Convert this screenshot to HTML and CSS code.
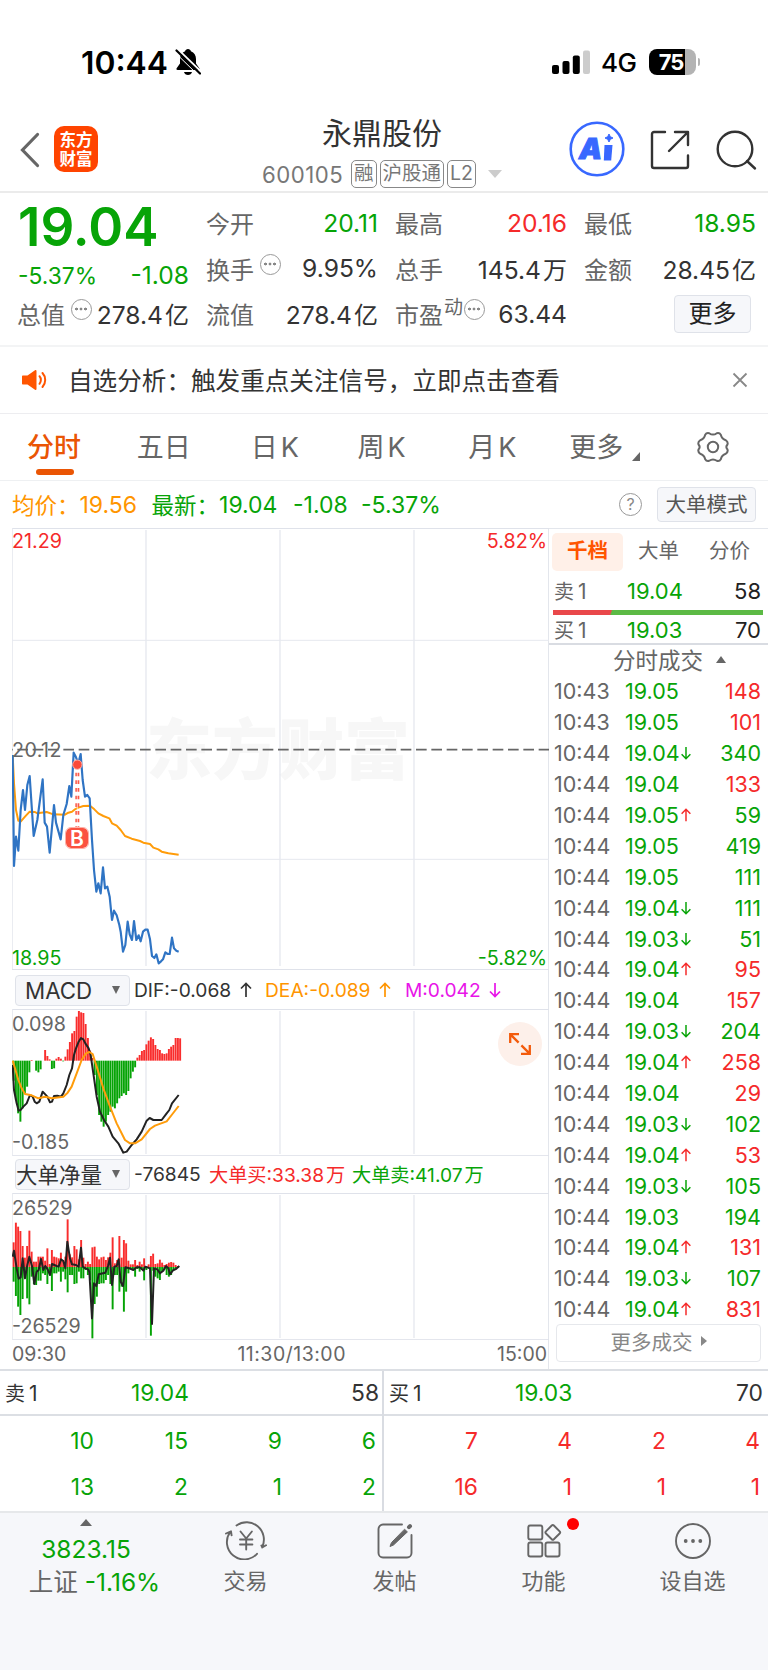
FILE: index.html
```html
<!DOCTYPE html>
<html lang="zh-CN">
<head>
    <meta charset="utf-8">
    <title>永鼎股份 600105</title>
    <link rel="stylesheet" href="styles.css">
</head>
<body>
    <div class="statusbar">
        <span class="time">10:44</span>
        <svg class="bell" width="26" height="28" viewBox="0 0 26 28">
            <path d="M13 1c-1.500 0-2.600 1-2.900 2.200C6.800 4.600 5 7.500 5 11v4.500L1.800 20c-.8 1.200-.3 2 .9 2h20.600c1.200 0 1.700-.8.900-2L21 15.500V11c0-3.500-1.800-6.400-5.100-7.800C15.600 2 14.500 1 13 1z"/>
            <path d="M9 24h8c-.5 1.900-2 3-4 3s-3.500-1.100-4-3z"/>
            <path d="M2.500 1l24 23" stroke="#fff" stroke-width="2"/>
            <path d="M1.500 2.500l23.500 23" stroke="#000" stroke-width="2.200" stroke-linecap="round"/>
            <path d="M0 4.500l23.500 23" stroke="#fff" stroke-width="1"/>
        </svg>
        <svg class="signal" width="38" height="24" viewBox="0 0 38 24">
            <rect x="0" y="15" width="7" height="9" rx="2"/>
            <rect x="10.500" y="11" width="7" height="13" rx="2"/>
            <rect x="20.800" y="5.500" width="7" height="18.500" rx="2"/>
            <rect x="31" y="0.500" width="7" height="23.500" rx="2" fill="#ccc"/>
        </svg>
        <span class="net">4G</span>
        <span class="battery"><b>75</b></span>
        <span class="battery-tip"></span>
    </div>

    <header class="header">
        <svg class="back" width="20" height="36" viewBox="0 0 20 36"><path d="M17.500 2.500L2.500 18l15 15.500" fill="none" stroke="#666" stroke-width="3.200" stroke-linecap="round"/></svg>
        <div class="logo">东方<br>财富</div>
        <div class="title">
            <h1>永鼎股份</h1>
            <div class="code">
                <span class="num">600105</span>
                <span class="tag">融</span>
                <span class="tag">沪股通</span>
                <span class="tag">L2</span>
                <i class="down"></i>
            </div>
        </div>
        <svg class="ai" width="56" height="56" viewBox="0 0 56 56">
            <circle cx="28" cy="28" r="26.300" fill="none" stroke="#3868ff" stroke-width="2.600"/>
            <text x="10" y="37.500">A</text>
            <path d="M35.500 24h8l-1.300 15.500h-7.400z" fill="#3868ff"/>
            <path d="M40 13l1.300 2.700L44 17l-2.700 1.300L40 21l-1.300-2.700L36 17l2.700-1.300z" fill="#3868ff" stroke="#3868ff" stroke-width="1"/>
        </svg>
        <svg class="share" width="40" height="40" viewBox="0 0 40 40" fill="none" stroke="#333" stroke-width="2.400" stroke-linecap="round" stroke-linejoin="round">
            <path d="M15 2H4a2 2 0 0 0-2 2v32a2 2 0 0 0 2 2h32a2 2 0 0 0 2-2V25.500"/>
            <path d="M25 2h13v13M38 2L19 21"/>
        </svg>
        <svg class="search" width="42" height="42" viewBox="0 0 42 42" fill="none" stroke="#333" stroke-width="2.400" stroke-linecap="round"><circle cx="20" cy="20" r="17.300"/><path d="M32 32l8 7.500"/></svg>
    </header>

    <section class="quote">
        <div class="price green">19.04</div>
        <div class="item"><label>今开</label><b class="green">20.11</b></div>
        <div class="item"><label>最高</label><b class="red">20.16</b></div>
        <div class="item"><label>最低</label><b class="green">18.95</b></div>
        <div class="item change green"><span>-5.37%</span><b class="green">-1.08</b></div>
        <div class="item"><label>换手</label><i class="dots"></i><b>9.95%</b></div>
        <div class="item"><label>总手</label><b>145.4<em>万</em></b></div>
        <div class="item"><label>金额</label><b>28.45<em>亿</em></b></div>
        <div class="item"><label>总值</label><i class="dots"></i><b>278.4<em>亿</em></b></div>
        <div class="item"><label>流值</label><b>278.4<em>亿</em></b></div>
        <div class="item"><label>市盈</label><sup>动</sup><i class="dots tight"></i><b>63.44</b></div>
        <div class="item"><button class="more">更多</button></div>
    </section>

    <section class="notice">
        <svg width="26" height="22" viewBox="0 0 26 22">
            <path d="M1 6.500h4.500L13 1.200c.8-.5 1.500-.1 1.500.8v18c0 .9-.7 1.300-1.500.8L5.500 15.500H1c-.6 0-1-.4-1-1v-7c0-.6.4-1 1-1z" fill="#ff5500"/>
            <path d="M17.500 7.200c1.800 2 1.800 5.600 0 7.600M20.500 4c3.600 3.800 3.600 10.200 0 14" fill="none" stroke="#ff5500" stroke-width="2" stroke-linecap="round"/>
        </svg>
        <p>自选分析：触发重点关注信号，立即点击查看</p>
        <svg class="close" width="16" height="16" viewBox="0 0 16 16"><path d="M1.500 1.500l13 13M14.500 1.500l-13 13" stroke="#888" stroke-width="1.800"/></svg>
    </section>

    <nav class="tabs">
        <a class="active">分时</a>
        <a>五日</a>
        <a>日<i>K</i></a>
        <a>周<i>K</i></a>
        <a>月<i>K</i></a>
        <a class="tab-more">更多</a>
        <svg class="gear" width="32" height="32" viewBox="0 0 32 32" fill="none" stroke="#666" stroke-width="2" stroke-linejoin="round">
            <path d="M12.200 2.200Q16 5 19.800 2.200Q22.500 1.500 23.800 3.800Q24.800 8 28.800 9.200Q31.300 11 30.500 13.500Q28.200 16 30.500 18.500Q31.300 21 28.800 22.800Q24.800 24 23.800 28.200Q22.500 30.500 19.800 29.800Q16 27 12.200 29.800Q9.500 30.500 8.200 28.200Q7.200 24 3.200 22.800Q.7 21 1.500 18.500Q3.800 16 1.500 13.500Q.7 11 3.200 9.200Q7.200 8 8.200 3.800Q9.500 1.500 12.200 2.200z"/>
            <circle cx="16" cy="16" r="5.200"/>
        </svg>
    </nav>

    <div class="infobar">
        <span class="orange name">均价：</span><span class="orange avg">19.56</span>
        <span class="green name">最新：</span><span class="green v1">19.04</span><span class="green v2">-1.08</span><span class="green v3">-5.37%</span>
        <i class="help">?</i>
        <button>大单模式</button>
    </div>

    <main class="board">
        <div class="charts">
            <div class="chart main-chart">
                <span class="watermark">东方财富</span>
                <svg id="price" width="537" height="442" viewBox="0 0 1611 1326"></svg>
                <span class="lt red">21.29</span>
                <span class="rt red">5.82%</span>
                <span class="mid">20.12</span>
                <span class="lb green">18.95</span>
                <span class="rb green">-5.82%</span>
                <span class="buy">B</span>
            </div>
            <div class="legend">
                <button>MACD<i></i></button>
                <span class="dif">DIF:-0.068 <svg class="arr" viewBox="0 0 12 16"><path d="M6 15V1.500M1 6.500l5-5 5 5"/></svg></span>
                <span class="dea orange">DEA:-0.089 <svg class="arr" viewBox="0 0 12 16"><path d="M6 15V1.500M1 6.500l5-5 5 5"/></svg></span>
                <span class="m">M:0.042 <svg class="arr" viewBox="0 0 12 16"><path d="M6 1v13.500M1 9.500l5 5 5-5"/></svg></span>
            </div>
            <div class="chart">
                <svg id="macd" width="537" height="147" viewBox="0 0 1611 441"></svg>
                <span class="lt">0.098</span>
                <span class="lb">-0.185</span>
                <span class="expand">
                    <svg width="24" height="24" viewBox="0 0 24 24" fill="none" stroke="#f35b0c" stroke-width="2.300"><path d="M2.200 11V2.200H11M2.600 2.600l8 8M21.800 13v8.800H13M21.400 21.400l-8-8"/></svg>
                </span>
            </div>
            <div class="legend second">
                <button>大单净量<i></i></button>
                <span class="net-v">-76845</span>
                <span class="net-b red">大单买:33.38<em>万</em></span>
                <span class="net-s green">大单卖:41.07<em>万</em></span>
            </div>
            <div class="chart">
                <svg id="flow" width="537" height="147" viewBox="0 0 1611 441"></svg>
                <span class="lt">26529</span>
                <span class="lb">-26529</span>
            </div>
            <div class="axis"><span>09:30</span><span class="noon">11:30/13:00</span><span>15:00</span></div>
        </div>

        <aside class="side">
            <div class="side-tabs"><a class="on">千档</a><a>大单</a><a>分价</a></div>
            <div class="level sell"><label>卖<i>1</i></label><span class="green">19.04</span><b>58</b></div>
            <div class="ratio"></div>
            <div class="level buyl"><label>买<i>1</i></label><span class="green">19.03</span><b>70</b></div>
            <div class="deal-title">分时成交<i></i></div>
            <div id="deals"></div>
            <button class="more-deals">更多成交<i></i></button>
        </aside>
    </main>

    <section class="depth">
        <div class="half">
            <div class="best"><label>卖<i>1</i></label><span class="green">19.04</span><b>58</b></div>
            <div class="queue green">
                <span>10</span><span>15</span><span>9</span><span>6</span>
                <span>13</span><span>2</span><span>1</span><span>2</span>
            </div>
        </div>
        <div class="half">
            <div class="best"><label>买<i>1</i></label><span class="green">19.03</span><b>70</b></div>
            <div class="queue red">
                <span>7</span><span>4</span><span>2</span><span>4</span>
                <span>16</span><span>1</span><span>1</span><span>1</span>
            </div>
        </div>
    </section>

    <footer class="footer">
        <div class="index">
            <i class="up"></i>
            <span class="green">3823.15</span>
            <span class="pct">上证 <b class="green">-1.16%</b></span>
        </div>
        <a>
            <svg width="44" height="40" viewBox="0 0 44 40" fill="none" stroke="#666" stroke-width="1.900" stroke-linecap="round" stroke-linejoin="round">
                <path d="M12.500 5.500A17.300 17.300 0 0 1 38.200 27M38.200 27l-.8-1.500M38.200 27.500l3.800-2.200M33 33.800A17.300 17.300 0 0 1 6.200 12M2 13.500l5-2.200 .6 4"/>
                <path d="M16.500 11.500l5.700 7 5.700-7M22.200 18.500v11M16 19.500h12.400M16 24.500h12.400"/>
            </svg>
            交易
        </a>
        <a>
            <svg width="44" height="40" viewBox="0 0 44 40" fill="none" stroke="#666" stroke-width="1.900" stroke-linecap="round">
                <path d="M29 4.500H10a4.500 4.500 0 0 0-4.500 4.500v24A4.500 4.500 0 0 0 10 37.500h24a4.500 4.500 0 0 0 4.500-4.500V15"/>
                <path d="M31.800 9.500l2.600 2.400L20.500 25l-3.500 1.500 1.300-3.500z" fill="#666" stroke-width="1"/><path d="M36 7.200l1-1" stroke-width="4"/>
            </svg>
            发帖
        </a>
        <a>
            <svg width="44" height="40" viewBox="0 0 44 40" fill="none" stroke="#666" stroke-width="1.900" stroke-linejoin="round">
                <rect x="6.300" y="5.500" width="14" height="14" rx="2"/>
                <rect x="6.300" y="22.500" width="14" height="14" rx="2"/>
                <rect x="23.500" y="22.500" width="14" height="14" rx="2"/>
                <rect x="25.200" y="6.800" width="11.200" height="11.200" rx="1.500" transform="rotate(45 30.800 12.400)"/>
            </svg>
            功能
            <em class="dot"></em>
        </a>
        <a>
            <svg width="44" height="40" viewBox="0 0 44 40" fill="none" stroke="#666" stroke-width="1.900">
                <circle cx="22" cy="21" r="17"/>
                <g fill="#666" stroke="none"><circle cx="14.700" cy="21" r="1.900"/><circle cx="22" cy="21" r="1.900"/><circle cx="29.300" cy="21" r="1.900"/></g>
            </svg>
            设自选
        </a>
    </footer>
    <script src="script.js"></script>
</body>
</html>
```
FILE: styles.css
```css
* {
    box-sizing: border-box;
}

body {
    margin: 0;
    width: 768px;
    height: 1670px;
    overflow: hidden;
    background: #fff;
    color: #333;
    font-family: Inter, "Noto Sans CJK SC", sans-serif;
    display: flex;
    flex-direction: column;
}

i, em {
    font-style: normal;
}

b {
    font-weight: 400;
}

button {
    font-family: inherit;
    padding: 0;
    background: #f6f7fa;
    border: 1px solid #dfe2e9;
    border-radius: 4px;
}

svg {
    display: block;
    flex: none;
}

.green { color: #07a407; }
.red { color: #f52a2a; }
.orange { color: #ff9500; }

/* status bar */
.statusbar {
    height: 106px;
    padding: 18px 68px 0 81px;
    display: flex;
    align-items: center;
    color: #000;
}

.time {
    width: 94px;
    font-size: 31.800px;
    font-weight: 600;
}

.signal {
    margin-left: auto;
}

.net {
    width: 60px;
    padding-left: 11px;
    font-size: 26px;
    font-weight: 500;
    letter-spacing: -0.5px;
}

.battery {
    width: 47px;
    height: 26px;
    margin-left: -1px;
    border-radius: 8px;
    background: linear-gradient(90deg, #000 36px, #b3b3b3 36px);
    color: #fff;
    text-align: center;
    line-height: 26px;
}

.battery b {
    margin-left: -3px;
    font-size: 22px;
    font-weight: 700;
    letter-spacing: -1px;
}

.battery-tip {
    width: 2px;
    height: 8px;
    margin-left: 2px;
    border-radius: 0 4px 4px 0;
    background: #b3b3b3;
}

/* header */
.header {
    height: 87px;
    padding: 0 11px 0 20px;
    border-bottom: 2px solid #ebebeb;
    display: flex;
    align-items: flex-start;
}

.back {
    margin-top: 26px;
}

.logo {
    width: 45px;
    height: 46px;
    margin: 20px 0 0 14px;
    padding-top: 5px;
    border-radius: 10px;
    background: #ff4400;
    color: #fff;
    font-size: 16.500px;
    font-weight: 700;
    line-height: 18.500px;
    text-align: center;
}

.title {
    width: 240px;
    margin: 8px 0 0 164px;
}

.title h1 {
    margin: 0;
    font-size: 30px;
    font-weight: 400;
    line-height: 38px;
    text-align: center;
}

.code {
    display: flex;
    align-items: center;
    margin-top: 8px;
    color: #777;
    white-space: nowrap;
}

.code .num {
    flex: none;
    width: 89px;
    font-size: 22.200px;
    letter-spacing: 0.500px;
}

.tag {
    flex: none;
    height: 28px;
    margin-right: 3px;
    padding: 0 2px;
    border: 1.500px solid #888;
    border-radius: 5px;
    font-size: 19.500px;
    line-height: 25px;
}

.down {
    margin-left: 9px;
    border: 7px solid transparent;
    border-top: 8px solid #ccc;
    border-bottom: 0;
}

.ai {
    margin: 15px 0 0 67px;
}

.ai text {
    font: italic 900 29px Inter;
    fill: #3868ff;
    stroke: #3868ff;
}

.share {
    margin: 24px 0 0 25px;
}

.search {
    margin: 23px 0 0 25px;
}

/* quote */
.quote {
    height: 154px;
    padding: 7px 13px 0 18px;
    border-bottom: 2px solid #f3f4f5;
    display: grid;
    grid-template-columns: repeat(4, 170px);
    grid-template-rows: 45px 46px 45px;
    column-gap: 19px;
}

.price {
    font-size: 53px;
    font-weight: 600;
    line-height: 55px;
}

.item {
    display: flex;
    align-items: center;
    white-space: nowrap;
}

.item label {
    margin-left: -1px;
    font-size: 24px;
    color: #666;
}

.item b {
    margin-right: -1px;
    margin-left: auto;
    font-size: 24.600px;
}

.item em {
    margin-left: 2px;
    font-size: 24px;
}

.change {
    padding-top: 14px;
}

.change span {
    font-size: 22.800px;
}

.item sup {
    margin: -12px 0 0 1px;
    font-size: 19px;
    line-height: 20px;
    color: #666;
}

.dots {
    flex: none;
    width: 21px;
    height: 21px;
    margin: -8px 0 0 6px;
    border: 1.500px solid #999;
    border-radius: 50%;
    background:
        radial-gradient(circle at 4.500px 9px, #888 1.200px, transparent 1.700px),
        radial-gradient(circle at 9px 9px, #888 1.200px, transparent 1.700px),
        radial-gradient(circle at 13.500px 9px, #888 1.200px, transparent 1.700px);
}

.dots.tight {
    margin-left: 1px;
}

.more {
    width: 77px;
    height: 38px;
    margin: 0 4px 0 auto;
    font-size: 24px;
    line-height: 34px;
    color: #222;
}

/* notice */
.notice {
    height: 67px;
    padding: 0 20px 0 22px;
    border-bottom: 1px solid #ededf0;
    display: flex;
    align-items: center;
}

.notice p {
    flex: 1;
    margin: -2px 0 0 20px;
    font-size: 24.600px;
}

/* period tabs */
.tabs {
    height: 67px;
    padding: 0 39px 0 27px;
    border-bottom: 1px solid #eef0f2;
    display: flex;
    align-items: center;
    color: #666;
    font-size: 27px;
}

.tabs a {
    position: relative;
    width: 110px;
    margin-top: -3px;
    white-space: nowrap;
}

.tabs a:nth-child(2) { width: 114px; }
.tabs a:nth-child(3) { width: 107px; }
.tabs a:nth-child(4) { width: 111px; }
.tabs a:nth-child(5) { width: 101px; }
.tabs a.tab-more { width: 128px; }

.tabs i {
    margin-left: 3px;
}

.tabs .active {
    color: #ea5504;
    font-weight: 500;
}

.tabs .active::after {
    content: "";
    position: absolute;
    left: 9px;
    bottom: -10px;
    width: 38px;
    height: 6px;
    border-radius: 3px;
    background: #ea5504;
}

.tab-more::after {
    content: "";
    display: inline-block;
    margin-left: 9px;
    border-left: 8px solid transparent;
    border-bottom: 9px solid #666;
    vertical-align: -4px;
}

/* average / last price */
.infobar {
    height: 47px;
    padding: 0 12px;
    display: flex;
    align-items: center;
    font-size: 23px;
    white-space: nowrap;
}

.infobar .name { margin-top: -2px; font-size: 22.500px; }
.infobar .avg { width: 72px; }
.infobar .v1 { width: 74px; }
.infobar .v2 { width: 68px; }

.help {
    width: 23px;
    height: 23px;
    margin-left: auto;
    border: 1.500px solid #999;
    border-radius: 50%;
    color: #888;
    font-size: 16px;
    line-height: 20px;
    text-align: center;
}

.infobar button {
    width: 99px;
    height: 35px;
    margin-left: 15px;
    font-size: 20.500px;
    line-height: 30px;
    color: #555;
}

/* charts */
.board {
    height: 841px;
    display: flex;
}

.charts {
    width: 548px;
    padding-left: 12px;
}

.chart {
    position: relative;
    height: 147px;
    font-size: 19.700px;
    line-height: 22px;
    color: #666;
}

.main-chart {
    height: 443px;
}

.chart > span {
    position: absolute;
}

.chart > svg {
    position: relative;
}

.lt { left: 0; top: 4px; }
.rt { right: 1px; top: 2px; }
.lb { left: 0; bottom: 3px; }
.rb { right: 1px; bottom: 2px; }
.mid { left: 0; top: 211px; letter-spacing: 0.400px; }
.main-chart .lt { top: 2px; }
.main-chart .lb { bottom: 2px; }

.chart .lt.red, .chart .rt.red { color: #f52a2a; }
.chart .lb.green, .chart .rb.green { color: #07a407; }

.chart .watermark {
    left: 134px;
    top: 177px;
    font-size: 66px;
    font-weight: 900;
    line-height: 90px;
    color: #f7f7f7;
}

.chart .buy {
    left: 54px;
    top: 300px;
    width: 22px;
    height: 20px;
    border-radius: 5px;
    background: #fb5240;
    outline: 1px solid #fdb1a9;
    color: #fff;
    font-size: 21px;
    font-weight: 600;
    line-height: 21px;
    text-align: center;
}

.chart .expand {
    right: 6px;
    top: 13px;
    width: 44px;
    height: 44px;
    padding: 10px;
    border-radius: 50%;
    background: #fdf0ea;
}

.legend {
    height: 38px;
    padding-left: 3px;
    display: flex;
    align-items: center;
    font-size: 19.200px;
    white-space: nowrap;
}

.legend.second {
    height: 37px;
}

.legend button {
    flex: none;
    width: 115px;
    height: 31px;
    margin-right: 4px;
    padding-left: 9px;
    display: flex;
    align-items: center;
    font-size: 22.300px;
    color: #333;
}

.legend.second button {
    padding: 0 0 2px;
    font-size: 21.500px;
}

.legend.second span {
    margin-top: -2px;
}

.legend button i {
    margin: 0 9px 0 auto;
    border: 4.500px solid transparent;
    border-top: 8px solid #666;
    border-bottom: 0;
}

.arr {
    display: inline-block;
    width: 12px;
    height: 16px;
    margin-left: 3px;
    vertical-align: -1px;
    fill: none;
    stroke: currentColor;
    stroke-width: 1.700;
}

.dif { width: 131px; }
.dea { width: 140px; }
.m { color: #e815e8; }
.net-v { width: 75px; }
.net-b { width: 143px; }
.legend em { margin-left: 2px; }

.axis {
    height: 28px;
    padding-right: 1px;
    display: flex;
    justify-content: space-between;
    align-items: center;
    font-size: 19.500px;
    color: #666;
}

.noon {
    margin-left: 20px;
    letter-spacing: 0.500px;
}

/* side panel */
.side {
    width: 220px;
    border-left: 1px solid #e3e6ec;
    border-top: 1px solid #e3e6ec;
    color: #666;
}

.side-tabs {
    display: flex;
    padding: 4px 0 0 3px;
    font-size: 20.500px;
}

.side-tabs a {
    width: 71px;
    height: 38px;
    line-height: 36px;
    text-align: center;
}

.side-tabs .on {
    border-radius: 5px;
    background: #fff0e8;
    color: #ff5500;
    font-weight: 700;
}

.level {
    display: grid;
    grid-template-columns: 73px 1fr auto;
    align-items: center;
    padding: 0 7px 0 5px;
    font-size: 22px;
}

.level label, .best label { font-size: 20px; }
.level label i, .best label i { margin-left: 4px; font-size: 21px; }

.level b {
    color: #222;
}

.sell {
    height: 39px;
}

.ratio {
    width: 210px;
    height: 5px;
    margin-left: 4px;
    background: linear-gradient(110deg, #e9484a 55px, #5cba45 56px);
}

.buyl {
    height: 30px;
    border-bottom: 2px solid #d9dce2;
}

.deal-title {
    height: 31px;
    padding: 0 0 3px 64px;
    display: flex;
    align-items: center;
    font-size: 22.500px;
}

.deal-title i {
    margin-left: 13px;
    border: 5px solid transparent;
    border-bottom: 7px solid #666;
    border-top: 0;
}

.deal {
    height: 30.900px;
    padding: 0 7px 0 5px;
    display: flex;
    align-items: center;
    font-size: 21.500px;
}

.deal span:first-child { width: 71px; }
.deal .p { width: 55px; }
.deal b { margin-left: auto; }
.deal .arr { margin: 0; stroke-width: 1.700; height: 14px; width: 12px; }

.more-deals {
    width: 205px;
    height: 38px;
    margin: -1px 0 0 7px;
    padding-bottom: 3px;
    background: #fff;
    border-color: #e6e8ec;
    display: flex;
    align-items: center;
    justify-content: center;
    color: #888;
    font-size: 20.500px;
}

.more-deals i {
    margin-left: 8px;
    border: 5px solid transparent;
    border-left: 6px solid #888;
    border-right: 0;
}

/* depth */
.depth {
    height: 142px;
    border-top: 2px solid #dcdfe4;
    display: flex;
    font-size: 22.800px;
}

.half {
    width: 384px;
}

.half:first-child {
    border-right: 2px solid #d9dce2;
}

.best {
    height: 45px;
    padding: 0 5px;
    border-bottom: 2px solid #dcdfe4;
    display: grid;
    grid-template-columns: 126px 1fr auto;
    align-items: center;
}

.half:first-child .best {
    padding-right: 3px;
}

.queue {
    display: grid;
    grid-template-columns: repeat(4, 94px);
    grid-auto-rows: 46px;
    align-items: center;
    padding-top: 1px;
    text-align: right;
}

/* footer */
.footer {
    flex: 1;
    border-top: 2px solid #e6e8ea;
    background: #f6f7fa;
    display: flex;
    color: #666;
    font-size: 22px;
}

.index {
    width: 171px;
    display: flex;
    flex-direction: column;
    align-items: center;
    padding-left: 1px;
}

.up {
    margin: 6px 0 8px;
    border: 6px solid transparent;
    border-bottom: 7px solid #666;
    border-top: 0;
}

.index .green {
    font-size: 24.500px;
    line-height: 30px;
}

.index .pct {
    margin-left: 17px;
    line-height: 37px;
    font-size: 24.500px;
    white-space: nowrap;
}

.footer a {
    position: relative;
    width: 149px;
    padding-top: 7px;
    display: flex;
    flex-direction: column;
    align-items: center;
    line-height: 43px;
}

.dot {
    position: absolute;
    left: 98px;
    top: 5px;
    width: 12px;
    height: 12px;
    border-radius: 50%;
    background: #f00;
}
```
FILE: script.js
```javascript
//成交明细: 时间, 价格, 方向, 手数, 颜色
const deals = [
    ["10:43", "19.05", "", 148, "red"],
    ["10:43", "19.05", "", 101, "red"],
    ["10:44", "19.04", "d", 340, "green"],
    ["10:44", "19.04", "", 133, "red"],
    ["10:44", "19.05", "u", 59, "green"],
    ["10:44", "19.05", "", 419, "green"],
    ["10:44", "19.05", "", 111, "green"],
    ["10:44", "19.04", "d", 111, "green"],
    ["10:44", "19.03", "d", 51, "green"],
    ["10:44", "19.04", "u", 95, "red"],
    ["10:44", "19.04", "", 157, "red"],
    ["10:44", "19.03", "d", 204, "green"],
    ["10:44", "19.04", "u", 258, "red"],
    ["10:44", "19.04", "", 29, "red"],
    ["10:44", "19.03", "d", 102, "green"],
    ["10:44", "19.04", "u", 53, "red"],
    ["10:44", "19.03", "d", 105, "green"],
    ["10:44", "19.03", "", 194, "green"],
    ["10:44", "19.04", "u", 131, "red"],
    ["10:44", "19.03", "d", 107, "green"],
    ["10:44", "19.04", "u", 831, "red"]
];
const arrows = {
    u: '<svg class="arr red" viewBox="0 0 12 16"><path d="M6 15V1.500M1 6.500l5-5 5 5"/></svg>',
    d: '<svg class="arr green" viewBox="0 0 12 16"><path d="M6 1v13.500M1 9.500l5 5 5-5"/></svg>'
};
document.querySelector("#deals").innerHTML = deals.map(([t, p, dir, n, c]) =>
    `<div class="deal"><span>${t}</span><span class="p green">${p}</span>${arrows[dir] || ""}<b class="${c}">${n}</b></div>`
).join("");

const GRID = "#e6e8ef";
const line = (pts, color, w) => `<polyline points="${pts}" fill="none" stroke="${color}" stroke-width="${w}" stroke-linejoin="round"/>`;
const seg = (x1, y1, x2, y2, color = GRID, w = 3) => `<path d="M${x1} ${y1}L${x2} ${y2}" stroke="${color}" stroke-width="${w}"/>`;

//边框和竖线
function frame(h) {
    return seg(0, 1.5, 1611, 1.5, "#dfe2ea") + seg(0, h - 1, 1611, h - 1, "#dfe2ea") + seg(1, 0, 1, h) +
        [402, 804, 1206].map(x => seg(x, 6, x, h - 6, GRID, 4)).join("");
}

//柱状图, 正值为红色向上, 负值为绿色向下
function bars(values, base) {
    return values.map((v, i) => {
        const x = 38 + i * 6.75;
        return v > 0
            ? `<rect x="${x}" y="${base - v}" width="5.8" height="${v}" fill="#f92d2d"/>`
            : `<rect x="${x}" y="${base}" width="5.8" height="${-v}" fill="#05a305"/>`;
    }).join("");
}

//分时价格
const price = "38,75 42,408 48,320 55,362 62,240 69,180 75,240 82,165 89,138 101,318 112,270 128,148 134,278 141,290 149,368 162,225 168,278 182,328 190,255 200,222 208,168 214,200 221,68 228,82 235,100 242,72 248,150 255,200 262,195 269,205 276,330 282,420 289,485 295,460 302,490 309,412 315,475 322,470 329,500 336,570 342,542 350,556 358,585 362,605 369,665 376,645 383,575 389,613 396,630 402,573 409,630 416,616 422,634 429,605 436,599 443,599 450,628 456,678 463,684 469,673 476,700 483,694 489,688 496,667 503,672 509,672 516,623 522,655 529,662 536,665";
const avg = "38,75 42,160 48,240 55,272 62,275 75,260 89,245 105,246 112,250 140,246 160,253 195,254 205,248 216,245 225,238 235,233 250,228 270,227 283,238 295,250 310,258 328,265 336,280 350,287 362,300 375,318 395,326 420,333 430,338 450,342 460,353 475,358 485,365 505,370 536,374";
document.querySelector("#price").innerHTML =
    seg(0, 1.5, 1611, 1.5, "#dfe2ea") + seg(1, 0, 1, 1326) + seg(0, 1324.5, 1611, 1324.5, "#dfe2ea") +
    [402, 804, 1206].map(x => seg(x, 6, x, 1314, GRID, 4)).join("") +
    seg(0, 337, 1611, 337) + seg(0, 994, 1611, 994) +
    `<path d="M0 665H1611" stroke="#666" stroke-width="5" stroke-dasharray="32 14" stroke-dashoffset="30"/>` +
    `<g transform="translate(-36 606)">` + line(avg, "#ff9c0a", 6) + line(price, "#2f74c4", 6.5) +
    `<path d="M232 105V292" stroke="#fb5a4a" stroke-width="12" stroke-dasharray="11 12"/><path d="M232 118V292" stroke="#fff" stroke-width="2"/>` +
    `<circle cx="232" cy="104" r="14" fill="#fb4a3a" stroke="#fdb1a9" stroke-width="3"/></g>`;

//MACD
const hist = [-60, -118, -158, -183, -143, -98, -78, -35, 2, 0, -30, -35, -26, 0, 32, 14, 4, -25, -23, 6, 11, 6, -2, 12, 34, 56, 82, 89, 132, 149, 145, 143, 110, 68, 30, 8, -43, -103, -163, -183, -198, -183, -163, -153, -138, -143, -128, -113, -106, -98, -103, -91, -53, -33, -20, 9, 17, 29, 32, 49, 60, 70, 65, 47, 35, 32, 22, 20, 22, 35, 42, 47, 68, 68, 67];
const dif = "38,315 42,390 50,430 56,452 62,450 70,440 80,430 90,405 98,410 104,425 110,430 118,425 128,395 133,400 142,410 150,427 156,425 162,408 172,407 183,410 190,400 200,375 208,345 216,325 222,285 228,265 236,245 243,234 250,238 256,250 266,265 272,285 280,340 290,410 300,455 312,480 325,500 338,530 355,550 370,578 380,575 395,555 410,538 425,515 440,482 449,474 460,480 485,480 500,460 508,450 516,430 536,405";
const dea = "38,302 45,325 55,360 65,385 75,402 95,406 115,415 135,410 155,415 190,410 203,398 215,380 230,340 245,300 258,280 268,276 278,282 290,320 310,385 330,440 350,490 375,540 390,550 405,550 425,538 450,507 465,497 500,484 515,465 536,438";
document.querySelector("#macd").innerHTML = frame(441) +
    `<g transform="translate(-36 -147)">` + bars(hist, 302) + line(dif, "#222", 6) + line(dea, "#ff9c0a", 6) + `</g>`;

//大单净量
const buy = [74, 133, 121, 108, 63, 28, 63, 109, 46, 16, 16, 31, 31, 31, 19, 56, 9, 51, 31, 29, 26, 43, 21, 31, 143, 38, 29, 63, 53, 23, 81, 28, 9, 16, 9, 59, 61, 31, 23, 29, 31, 21, 29, 43, 89, 11, 21, 93, 28, 81, 71, 19, 8, 8, 21, 6, 16, 8, 26, 3, 8, 33, 40, 9, 11, 22, 13, 6, 9, 13, 15, 13, 6, 3];
const sell = [44, 87, 119, 144, 96, 29, 94, 112, 29, 51, 54, 41, 41, 19, 24, 51, 19, 72, 19, 19, 14, 44, 14, 37, 76, 24, 24, 51, 49, 14, 34, 34, 9, 24, 40, 214, 111, 89, 51, 49, 49, 39, 24, 51, 127, 24, 24, 74, 59, 134, 74, 19, 7, 9, 29, 6, 14, 9, 40, 9, 4, 206, 11, 29, 34, 39, 12, 7, 24, 29, 24, 12, 5, 2];
const net = "38,290 42,272 50,325 56,356 62,352 68,295 75,355 82,315 88,290 96,318 103,372 110,335 116,330 123,297 130,330 136,318 143,328 150,345 156,312 170,318 176,320 183,298 190,303 196,325 202,245 210,295 216,313 228,315 236,320 243,263 248,320 256,325 264,328 268,335 276,475 282,370 289,378 296,343 316,338 324,318 330,293 336,375 343,320 350,318 356,298 362,365 369,378 376,322 388,325 400,330 410,322 420,322 430,332 436,320 450,325 456,492 462,325 472,328 480,340 490,332 498,318 505,325 510,343 520,330 528,327 538,318";
document.querySelector("#flow").innerHTML = frame(441) +
    `<g transform="translate(-36 -99)">` + bars(buy, 321) + bars(sell.map(v => -v), 321) + line(net, "#222", 6) + `</g>`;
```
